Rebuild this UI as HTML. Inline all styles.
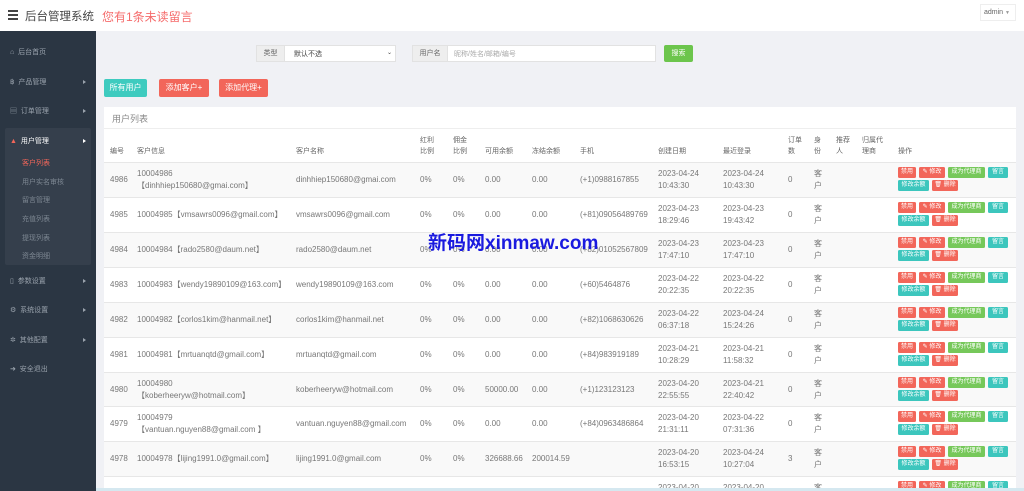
<!DOCTYPE html>
<html><head><meta charset="utf-8"><style>
*{margin:0;padding:0;box-sizing:border-box}
html,body{width:1024px;height:491px;overflow:hidden}
body{background:#f0f1f5;font-family:"Liberation Sans","Noto Sans CJK SC",sans-serif;position:relative;color:#777}
.a{position:absolute;white-space:nowrap}
#hdr{position:absolute;left:0;top:0;width:1024px;height:31px;background:#fff}
#side{position:absolute;left:0;top:31px;width:96px;height:460px;background:#2b3643}
.si{position:absolute;left:10px;font-size:7px;color:#9aa3ad}
.sub{position:absolute;left:22px;font-size:7px;color:#7d8792}
.arr{position:absolute;left:83px;width:0;height:0;border-left:3px solid #9aa3ad;border-top:2.5px solid transparent;border-bottom:2.5px solid transparent}
.btn{position:absolute;color:#fff;font-size:8px;border-radius:2px;text-align:center;line-height:16px;height:16px}
#panel{position:absolute;left:104px;top:107px;width:912px;height:384px;background:#fff}
.row{position:absolute;left:104px;width:912px;height:35px;border-top:1px solid #e7e7e7;font-size:8px;color:#777}
.g{background:#f9f9f9}
.row span{position:absolute;white-space:nowrap;line-height:12px}
.m{top:11px}.t{top:5px}
.b{position:absolute;height:11px;line-height:11px;font-size:6px;color:#fff;border-radius:1.5px;text-align:center}
.r{background:#f2665a}.gr{background:#76c85a}.c{background:#3cc6bd}
.th{position:absolute;font-size:7px;color:#666;line-height:11px}
</style></head><body>
<div id="hdr">
 <div class="a" style="left:8px;top:10px;width:10px;height:1.6px;background:#444"></div>
 <div class="a" style="left:8px;top:14px;width:10px;height:1.6px;background:#444"></div>
 <div class="a" style="left:8px;top:18px;width:10px;height:1.6px;background:#444"></div>
 <div class="a" style="left:25px;top:8px;font-size:11.5px;color:#444">后台管理系统</div>
 <div class="a" style="left:102px;top:8px;font-size:12px;color:#f56b6b">您有1条未读留言</div>
 <div class="a" style="left:980px;top:4px;width:36px;height:17px;border:1px solid #eee;font-size:7px;color:#666;line-height:15px;padding-left:3px">admin <span style="font-size:5px;color:#999">▼</span></div>
</div>
<div id="side">
 <div class="si" style="top:16px">⌂&nbsp; 后台首页</div>
 <div class="si" style="top:46px">฿&nbsp; 产品管理</div><div class="arr" style="top:49px"></div>
 <div class="si" style="top:75px">▤&nbsp; 订单管理</div><div class="arr" style="top:78px"></div>
 <div class="a" style="left:5px;top:97px;width:86px;height:137px;background:#353f4c;border-radius:2px"></div>
 <div class="si" style="top:105px;color:#fff"><span style="color:#f2665a">▲</span>&nbsp; 用户管理</div><div class="arr" style="top:108px;border-left-color:#fff"></div>
 <div class="sub" style="top:127px;color:#f2665a">客户列表</div>
 <div class="sub" style="top:146px">用户实名审核</div>
 <div class="sub" style="top:164px">留言管理</div>
 <div class="sub" style="top:183px">充值列表</div>
 <div class="sub" style="top:202px">提现列表</div>
 <div class="sub" style="top:220px">资金明细</div>
 <div class="si" style="top:245px">▯&nbsp; 参数设置</div><div class="arr" style="top:248px"></div>
 <div class="si" style="top:274px">⚙&nbsp; 系统设置</div><div class="arr" style="top:277px"></div>
 <div class="si" style="top:304px">✲&nbsp; 其他配置</div><div class="arr" style="top:307px"></div>
 <div class="si" style="top:333px">➜&nbsp; 安全退出</div>
</div>
<div class="a" style="left:256px;top:45px;width:140px;height:17px;background:#fff;border:1px solid #e2e2e2"></div>
<div class="a" style="left:256px;top:45px;width:29px;height:17px;background:#eee;border:1px solid #e2e2e2;font-size:7px;line-height:15px;text-align:center;color:#666">类型</div>
<div class="a" style="left:294px;top:49px;font-size:7px;color:#444">默认不选</div>
<div class="a" style="left:387px;top:49px;font-size:6px;color:#444">⌄</div>
<div class="a" style="left:412px;top:45px;width:244px;height:17px;background:#fff;border:1px solid #e2e2e2"></div>
<div class="a" style="left:412px;top:45px;width:36px;height:17px;background:#eee;border:1px solid #e2e2e2;font-size:7px;line-height:15px;text-align:center;color:#666">用户名</div>
<div class="a" style="left:454px;top:49px;font-size:7px;color:#aaa">昵称/姓名/邮箱/编号</div>
<div class="btn" style="left:664px;top:45px;width:29px;height:17px;background:#6cc54c;font-size:7px;line-height:17px">搜索</div>
<div class="btn" style="left:104px;top:79px;width:43px;height:18px;line-height:18px;background:#3ecbbf">所有用户</div>
<div class="btn" style="left:159px;top:79px;width:50px;height:18px;line-height:18px;background:#f2665a">添加客户+</div>
<div class="btn" style="left:219px;top:79px;width:49px;height:18px;line-height:18px;background:#f2665a">添加代理+</div>
<div id="panel"></div>
<div class="a" style="left:112px;top:112px;font-size:9px;color:#888">用户列表</div>
<div class="a" style="left:104px;top:128px;width:912px;height:1px;background:#eee"></div>
<div class="th" style="left:110px;top:146px">编号</div>
<div class="th" style="left:137px;top:146px">客户信息</div>
<div class="th" style="left:296px;top:146px">客户名称</div>
<div class="th" style="left:420px;top:135px">红利<br>比例</div>
<div class="th" style="left:453px;top:135px">佣金<br>比例</div>
<div class="th" style="left:485px;top:146px">可用余额</div>
<div class="th" style="left:532px;top:146px">冻结余额</div>
<div class="th" style="left:580px;top:146px">手机</div>
<div class="th" style="left:658px;top:146px">创建日期</div>
<div class="th" style="left:723px;top:146px">最近登录</div>
<div class="th" style="left:788px;top:135px">订单<br>数</div>
<div class="th" style="left:814px;top:135px">身<br>份</div>
<div class="th" style="left:836px;top:135px">推荐<br>人</div>
<div class="th" style="left:862px;top:135px">归属代<br>理商</div>
<div class="th" style="left:898px;top:146px">操作</div>

<div class="row g" style="top:162px"><span class="m" style="left:6px">4986</span><span class="t" style="left:33px">10004986<br>【dinhhiep150680@gmai.com】</span><span class="m" style="left:192px">dinhhiep150680@gmai.com</span><span class="m" style="left:316px">0%</span><span class="m" style="left:349px">0%</span><span class="m" style="left:381px">0.00</span><span class="m" style="left:428px">0.00</span><span class="m" style="left:476px">(+1)0988167855</span><span class="t" style="left:554px">2023-04-24<br>10:43:30</span><span class="t" style="left:619px">2023-04-24<br>10:43:30</span><span class="m" style="left:684px">0</span><span class="t" style="left:710px">客<br>户</span></div>
<div class="row" style="top:197px"><span class="m" style="left:6px">4985</span><span class="m" style="left:33px">10004985【vmsawrs0096@gmail.com】</span><span class="m" style="left:192px">vmsawrs0096@gmail.com</span><span class="m" style="left:316px">0%</span><span class="m" style="left:349px">0%</span><span class="m" style="left:381px">0.00</span><span class="m" style="left:428px">0.00</span><span class="m" style="left:476px">(+81)09056489769</span><span class="t" style="left:554px">2023-04-23<br>18:29:46</span><span class="t" style="left:619px">2023-04-23<br>19:43:42</span><span class="m" style="left:684px">0</span><span class="t" style="left:710px">客<br>户</span></div>
<div class="row g" style="top:232px"><span class="m" style="left:6px">4984</span><span class="m" style="left:33px">10004984【rado2580@daum.net】</span><span class="m" style="left:192px">rado2580@daum.net</span><span class="m" style="left:316px">0%</span><span class="m" style="left:349px">0%</span><span class="m" style="left:381px">0.00</span><span class="m" style="left:428px">0.00</span><span class="m" style="left:476px">(+82)01052567809</span><span class="t" style="left:554px">2023-04-23<br>17:47:10</span><span class="t" style="left:619px">2023-04-23<br>17:47:10</span><span class="m" style="left:684px">0</span><span class="t" style="left:710px">客<br>户</span></div>
<div class="row" style="top:267px"><span class="m" style="left:6px">4983</span><span class="m" style="left:33px">10004983【wendy19890109@163.com】</span><span class="m" style="left:192px">wendy19890109@163.com</span><span class="m" style="left:316px">0%</span><span class="m" style="left:349px">0%</span><span class="m" style="left:381px">0.00</span><span class="m" style="left:428px">0.00</span><span class="m" style="left:476px">(+60)5464876</span><span class="t" style="left:554px">2023-04-22<br>20:22:35</span><span class="t" style="left:619px">2023-04-22<br>20:22:35</span><span class="m" style="left:684px">0</span><span class="t" style="left:710px">客<br>户</span></div>
<div class="row g" style="top:302px"><span class="m" style="left:6px">4982</span><span class="m" style="left:33px">10004982【corlos1kim@hanmail.net】</span><span class="m" style="left:192px">corlos1kim@hanmail.net</span><span class="m" style="left:316px">0%</span><span class="m" style="left:349px">0%</span><span class="m" style="left:381px">0.00</span><span class="m" style="left:428px">0.00</span><span class="m" style="left:476px">(+82)1068630626</span><span class="t" style="left:554px">2023-04-22<br>06:37:18</span><span class="t" style="left:619px">2023-04-24<br>15:24:26</span><span class="m" style="left:684px">0</span><span class="t" style="left:710px">客<br>户</span></div>
<div class="row" style="top:337px"><span class="m" style="left:6px">4981</span><span class="m" style="left:33px">10004981【mrtuanqtd@gmail.com】</span><span class="m" style="left:192px">mrtuanqtd@gmail.com</span><span class="m" style="left:316px">0%</span><span class="m" style="left:349px">0%</span><span class="m" style="left:381px">0.00</span><span class="m" style="left:428px">0.00</span><span class="m" style="left:476px">(+84)983919189</span><span class="t" style="left:554px">2023-04-21<br>10:28:29</span><span class="t" style="left:619px">2023-04-21<br>11:58:32</span><span class="m" style="left:684px">0</span><span class="t" style="left:710px">客<br>户</span></div>
<div class="row g" style="top:372px"><span class="m" style="left:6px">4980</span><span class="t" style="left:33px">10004980<br>【koberheeryw@hotmail.com】</span><span class="m" style="left:192px">koberheeryw@hotmail.com</span><span class="m" style="left:316px">0%</span><span class="m" style="left:349px">0%</span><span class="m" style="left:381px">50000.00</span><span class="m" style="left:428px">0.00</span><span class="m" style="left:476px">(+1)123123123</span><span class="t" style="left:554px">2023-04-20<br>22:55:55</span><span class="t" style="left:619px">2023-04-21<br>22:40:42</span><span class="m" style="left:684px">0</span><span class="t" style="left:710px">客<br>户</span></div>
<div class="row" style="top:406px"><span class="m" style="left:6px">4979</span><span class="t" style="left:33px">10004979<br>【vantuan.nguyen88@gmail.com 】</span><span class="m" style="left:192px">vantuan.nguyen88@gmail.com</span><span class="m" style="left:316px">0%</span><span class="m" style="left:349px">0%</span><span class="m" style="left:381px">0.00</span><span class="m" style="left:428px">0.00</span><span class="m" style="left:476px">(+84)0963486864</span><span class="t" style="left:554px">2023-04-20<br>21:31:11</span><span class="t" style="left:619px">2023-04-22<br>07:31:36</span><span class="m" style="left:684px">0</span><span class="t" style="left:710px">客<br>户</span></div>
<div class="row g" style="top:441px"><span class="m" style="left:6px">4978</span><span class="m" style="left:33px">10004978【lijing1991.0@gmail.com】</span><span class="m" style="left:192px">lijing1991.0@gmail.com</span><span class="m" style="left:316px">0%</span><span class="m" style="left:349px">0%</span><span class="m" style="left:381px">326688.66</span><span class="m" style="left:428px">200014.59</span><span class="t" style="left:554px">2023-04-20<br>16:53:15</span><span class="t" style="left:619px">2023-04-24<br>10:27:04</span><span class="m" style="left:684px">3</span><span class="t" style="left:710px">客<br>户</span></div>
<div class="row" style="top:476px"><span class="t" style="left:554px">2023-04-20</span><span class="t" style="left:619px">2023-04-20</span><span class="t" style="left:710px">客</span></div>

<div style="position:absolute;left:0;top:0">
<div class="b r" style="left:898px;top:167px;width:18px">禁用</div><div class="b r" style="left:919px;top:167px;width:26px">✎ 修改</div><div class="b gr" style="left:948px;top:167px;width:37px">成为代理商</div><div class="b c" style="left:988px;top:167px;width:20px">留言</div><div class="b c" style="left:898px;top:180px;width:31px">修改余额</div><div class="b r" style="left:932px;top:180px;width:26px">🗑 删除</div>
<div class="b r" style="left:898px;top:202px;width:18px">禁用</div><div class="b r" style="left:919px;top:202px;width:26px">✎ 修改</div><div class="b gr" style="left:948px;top:202px;width:37px">成为代理商</div><div class="b c" style="left:988px;top:202px;width:20px">留言</div><div class="b c" style="left:898px;top:215px;width:31px">修改余额</div><div class="b r" style="left:932px;top:215px;width:26px">🗑 删除</div>
<div class="b r" style="left:898px;top:237px;width:18px">禁用</div><div class="b r" style="left:919px;top:237px;width:26px">✎ 修改</div><div class="b gr" style="left:948px;top:237px;width:37px">成为代理商</div><div class="b c" style="left:988px;top:237px;width:20px">留言</div><div class="b c" style="left:898px;top:250px;width:31px">修改余额</div><div class="b r" style="left:932px;top:250px;width:26px">🗑 删除</div>
<div class="b r" style="left:898px;top:272px;width:18px">禁用</div><div class="b r" style="left:919px;top:272px;width:26px">✎ 修改</div><div class="b gr" style="left:948px;top:272px;width:37px">成为代理商</div><div class="b c" style="left:988px;top:272px;width:20px">留言</div><div class="b c" style="left:898px;top:285px;width:31px">修改余额</div><div class="b r" style="left:932px;top:285px;width:26px">🗑 删除</div>
<div class="b r" style="left:898px;top:307px;width:18px">禁用</div><div class="b r" style="left:919px;top:307px;width:26px">✎ 修改</div><div class="b gr" style="left:948px;top:307px;width:37px">成为代理商</div><div class="b c" style="left:988px;top:307px;width:20px">留言</div><div class="b c" style="left:898px;top:320px;width:31px">修改余额</div><div class="b r" style="left:932px;top:320px;width:26px">🗑 删除</div>
<div class="b r" style="left:898px;top:342px;width:18px">禁用</div><div class="b r" style="left:919px;top:342px;width:26px">✎ 修改</div><div class="b gr" style="left:948px;top:342px;width:37px">成为代理商</div><div class="b c" style="left:988px;top:342px;width:20px">留言</div><div class="b c" style="left:898px;top:355px;width:31px">修改余额</div><div class="b r" style="left:932px;top:355px;width:26px">🗑 删除</div>
<div class="b r" style="left:898px;top:377px;width:18px">禁用</div><div class="b r" style="left:919px;top:377px;width:26px">✎ 修改</div><div class="b gr" style="left:948px;top:377px;width:37px">成为代理商</div><div class="b c" style="left:988px;top:377px;width:20px">留言</div><div class="b c" style="left:898px;top:390px;width:31px">修改余额</div><div class="b r" style="left:932px;top:390px;width:26px">🗑 删除</div>
<div class="b r" style="left:898px;top:411px;width:18px">禁用</div><div class="b r" style="left:919px;top:411px;width:26px">✎ 修改</div><div class="b gr" style="left:948px;top:411px;width:37px">成为代理商</div><div class="b c" style="left:988px;top:411px;width:20px">留言</div><div class="b c" style="left:898px;top:424px;width:31px">修改余额</div><div class="b r" style="left:932px;top:424px;width:26px">🗑 删除</div>
<div class="b r" style="left:898px;top:446px;width:18px">禁用</div><div class="b r" style="left:919px;top:446px;width:26px">✎ 修改</div><div class="b gr" style="left:948px;top:446px;width:37px">成为代理商</div><div class="b c" style="left:988px;top:446px;width:20px">留言</div><div class="b c" style="left:898px;top:459px;width:31px">修改余额</div><div class="b r" style="left:932px;top:459px;width:26px">🗑 删除</div>
<div class="b r" style="left:898px;top:481px;width:18px">禁用</div><div class="b r" style="left:919px;top:481px;width:26px">✎ 修改</div><div class="b gr" style="left:948px;top:481px;width:37px">成为代理商</div><div class="b c" style="left:988px;top:481px;width:20px">留言</div>
</div>
<div class="a" style="left:428px;top:228px;font-size:19px;font-weight:bold;color:#1a1adf">新码网xinmaw.com</div>
<div class="a" style="left:96px;top:488px;width:928px;height:3px;background:#d5e8f0"></div>
</body></html>
